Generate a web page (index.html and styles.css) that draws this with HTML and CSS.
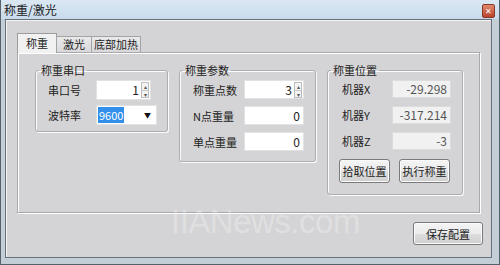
FILE: index.html
```html
<!DOCTYPE html>
<html>
<head>
    <title>称重/激光</title>
    <link rel="stylesheet" href="styles.css">
</head>
<body>
    <div class="window">
        <div class="titlebar">
            <span class="title">称重/激光</span>
            <span class="close">&#x2715;</span>
        </div>
        <div class="client">
            <div class="tabs">
                <div class="tab active">称重</div>
                <div class="tab tab-laser">激光</div>
                <div class="tab tab-heat">底部加热</div>
            </div>
            <div class="panel">
                <fieldset class="group group-port">
                    <legend>称重串口</legend>
                    <div class="rows">
                        <label>串口号</label>
                        <div class="field spin">
                            <span class="value">1</span>
                            <span class="spinner"><i>&#x25B4;</i><i>&#x25BE;</i></span>
                        </div>
                        <label>波特率</label>
                        <div class="field select">
                            <span class="selected">9600</span>
                            <span class="arrow">&#x25BC;</span>
                        </div>
                    </div>
                </fieldset>

                <fieldset class="group group-param">
                    <legend>称重参数</legend>
                    <div class="rows">
                        <label>称重点数</label>
                        <div class="field spin">
                            <span class="value">3</span>
                            <span class="spinner"><i>&#x25B4;</i><i>&#x25BE;</i></span>
                        </div>
                        <label>N点重量</label>
                        <div class="field"><span class="value">0</span></div>
                        <label>单点重量</label>
                        <div class="field"><span class="value">0</span></div>
                    </div>
                </fieldset>

                <fieldset class="group group-pos">
                    <legend>称重位置</legend>
                    <div class="rows">
                        <label>机器X</label>
                        <div class="field readonly"><span class="value">-29.298</span></div>
                        <label>机器Y</label>
                        <div class="field readonly"><span class="value">-317.214</span></div>
                        <label>机器Z</label>
                        <div class="field readonly"><span class="value">-3</span></div>
                    </div>
                    <div class="actions">
                        <button>拾取位置</button>
                        <button>执行称重</button>
                    </div>
                </fieldset>
            </div>
            <div class="footer">
                <button class="save">保存配置</button>
            </div>
            <div class="watermark">IIANews.com</div>
        </div>
    </div>
</body>
</html>
```

FILE: styles.css
```css
body {
  margin: 0;
  width: 500px;
  height: 265px;
  overflow: hidden;
  font-family: "Noto Sans CJK SC", "Liberation Sans", sans-serif;
  font-size: 11px;
  color: #222;
}

.window {
  width: 500px;
  height: 265px;
  box-sizing: border-box;
  background: #c4ced6;
  border: 1px solid #56616c;
  border-top: 0;
  display: flex;
  flex-direction: column;
}

.titlebar {
  height: 19px;
  display: flex;
  align-items: center;
  justify-content: space-between;
  padding: 0 4px 0 3px;
  background: linear-gradient(to bottom, #dbe8f3, #c8dbeb);
}

.title {
  line-height: 14px;
  font-size: 12px;
}

.close {
  width: 13px;
  height: 14px;
  margin-top: 3px;
  border-radius: 2px;
  background: linear-gradient(to bottom, #e08a6c, #b9432a);
  border: 1px solid #8a3a2a;
  color: #fff;
  font-size: 8px;
  line-height: 12px;
  text-align: center;
  box-sizing: border-box;
}

.client {
  position: relative;
  flex: 1;
  margin: 0 7px 6px 4px;
  border: 1px solid #66717c;
  background: #d4d3d5;
  box-shadow: inset 1px 1px 0 #f4f4f4;
  padding: 12px 0 0 11px;
  display: flex;
  flex-direction: column;
}

.tabs {
  display: flex;
  align-items: flex-end;
  height: 20px;
  position: relative;
  z-index: 1;
}

.tab {
  height: 15px;
  line-height: 15px;
  box-sizing: content-box;
  text-align: center;
  border: 1px solid #a3a3a6;
  border-bottom: 0;
  background: linear-gradient(to bottom, #e9e9ea, #d9d9db);
  margin-left: -1px;
}

.tab.active {
  height: 19px;
  line-height: 19px;
  width: 38px;
  margin-left: 0;
  margin-bottom: -1px;
  background: #f1f1f2;
  border-color: #9d9da0;
}

.tab-laser {
  width: 34px;
}

.tab-heat {
  width: 48px;
}

.panel {
  width: 463px;
  height: 161px;
  box-sizing: border-box;
  border: 1px solid #a9a9ac;
  box-shadow: inset 1px 1px 0 #fff, 1px 1px 0 #fff;
  background: #d4d3d5;
  display: flex;
  align-items: flex-start;
  gap: 11px;
  padding: 9px 0 0 17px;
}

.group {
  margin: 0;
  border: 1px solid #aeadb0;
  border-radius: 3px;
  box-shadow: inset 1px 1px 0 #fbfbfb, 1px 1px 0 #fbfbfb;
  padding: 2px 0 0 12px;
  box-sizing: border-box;
}

.group legend {
  padding: 0 2px;
  margin-left: -9px;
  line-height: 16px;
}

.rows {
  display: grid;
  align-items: center;
}

.group-port {
  width: 133px;
  height: 70px;
}

.group-port .rows {
  grid-template-columns: 48px 55px;
  row-gap: 5px;
  grid-auto-rows: 20px;
}

.group-param {
  width: 137px;
  height: 100px;
  padding-left: 13px;
}

.group-param legend {
  margin-left: -10px;
}

.group-param .rows {
  grid-template-columns: 51px 60px;
  row-gap: 7px;
  grid-auto-rows: 19px;
}

.group-pos {
  width: 136px;
  height: 133px;
  padding-left: 14px;
}

.group-pos legend {
  margin-left: -11px;
}

.group-pos .rows {
  grid-template-columns: 50px 59px;
  row-gap: 8px;
  grid-auto-rows: 18px;
}

.rows label {
  line-height: 16px;
}

.field {
  height: 100%;
  background: #fff;
  border: 1px solid #e2e2e2;
  box-sizing: border-box;
  display: flex;
  align-items: center;
  justify-content: flex-end;
  padding-right: 3px;
}

.field .value {
  line-height: 16px;
  font-size: 12px;
}

.field.readonly {
  background: #f1f1f1;
  border-color: #dcdcdc;
  color: #555;
}

.field.spin {
  padding-right: 1px;
}

.spinner {
  display: flex;
  flex-direction: column;
  width: 8px;
  height: 16px;
  margin-left: 2px;
  border: 1px solid #bdbdbd;
  box-sizing: border-box;
  background: #f3f3f3;
}

.spinner i {
  flex: 1;
  font-style: normal;
  font-size: 6px;
  line-height: 7px;
  text-align: center;
  color: #555;
}

.spinner i + i {
  border-top: 1px solid #c8c8c8;
}

.field.select {
  width: 61px;
  justify-content: space-between;
  padding: 0 5px 0 1px;
}

.selected {
  background: #3390ea;
  color: #fff;
  line-height: 16px;
  padding: 0 1px;
}

.arrow {
  font-size: 7px;
  color: #111;
}

.actions {
  display: flex;
  gap: 9px;
  margin: 9px 0 0 -3px;
}

button {
  font-family: "Noto Sans CJK SC", "Liberation Sans", sans-serif;
  font-size: 11px;
  color: #222;
  height: 24px;
  width: 51px;
  padding: 0;
  border: 1px solid #7a7a7a;
  border-radius: 3px;
  background: linear-gradient(to bottom, #f4f4f4 0%, #ebebeb 50%, #dddddd 51%, #d0d0d0 100%);
  box-shadow: inset 0 0 0 1px #fbfbfb;
}

.footer {
  display: flex;
  justify-content: flex-end;
  padding: 9px 8px 0 0;
}

.save {
  width: 70px;
  height: 23px;
}

.watermark {
  position: absolute;
  left: 165px;
  top: 183px;
  font-family: "Liberation Sans", sans-serif;
  font-size: 33px;
  letter-spacing: -0.5px;
  color: rgba(255, 255, 255, 0.3);
  pointer-events: none;
}
```
